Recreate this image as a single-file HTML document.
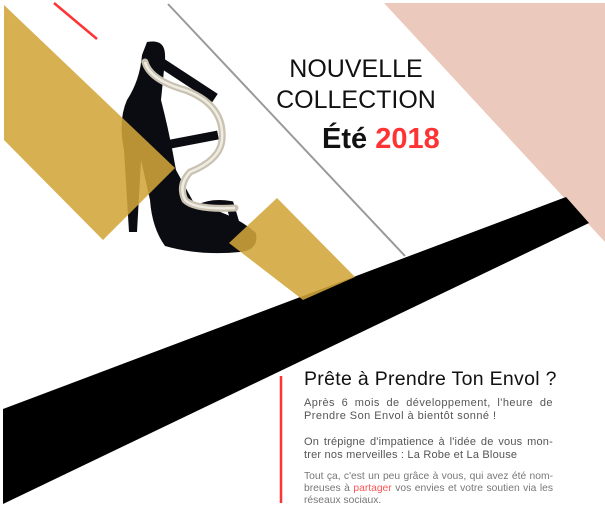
<!DOCTYPE html>
<html><head><meta charset="utf-8"><style>
html,body{margin:0;padding:0;background:#fff;}
body{width:605px;height:508px;position:relative;overflow:hidden;font-family:"Liberation Sans",sans-serif;}
svg{position:absolute;left:0;top:0;}
.t{position:absolute;color:#111;font-weight:300;}
p{margin:0;position:absolute;left:304px;width:249px;text-align:justify;font-size:11px;letter-spacing:0.45px;line-height:12.5px;color:#555;}
p span.j{display:block;text-align:justify;text-align-last:justify;white-space:nowrap;}
</style></head><body>
<svg width="605" height="508" viewBox="0 0 605 508">
<polygon points="384,3 605,3 605,242" fill="#ecc9bd"/>
<line x1="168" y1="4" x2="405" y2="256" stroke="#9a9a9a" stroke-width="2"/>
<line x1="54" y1="3" x2="97" y2="39" stroke="#f33" stroke-width="2.5"/>
<polygon points="3,409 566,197 589,223 3,504" fill="#000"/>
<path d="M147,42 C160,40 166,44 165,60 L161,100 Q170,135 176,170 L195,205 Q232,212 256,233 Q259,250 240,252 Q200,256 165,246 Q152,228 150,200 L141,160 L137,232 L129,232 L124,150 Q118,120 127,100 Q140,80 142,55 Z" fill="#0b0b12"/>
<path d="M160,62 L215,98" stroke="#0b0b12" stroke-width="10"/>
<path d="M150,148 L218,135" stroke="#0b0b12" stroke-width="9"/>
<path d="M182,222 Q200,200 230,205 L236,225" stroke="#0b0b12" stroke-width="8" fill="none"/>
<path d="M145,62 Q150,80 185,90 Q225,105 222,140 Q220,160 190,172 Q178,185 185,200 Q195,210 235,208" stroke="#c9c2b0" stroke-width="7" fill="none" stroke-linecap="round"/>
<path d="M145,62 Q150,80 185,90 Q225,105 222,140 Q220,160 190,172 Q178,185 185,200 Q195,210 235,208" stroke="#efece4" stroke-width="2.5" fill="none"/>
<polygon points="4,5 175,168 103,240 4,140" fill="#d2a53a" opacity="0.88"/>
<polygon points="229,243 277,198 355,277 303,300" fill="#d2a53a" opacity="0.88"/>
<line x1="281" y1="376" x2="281" y2="503" stroke="#f33" stroke-width="2.5"/>
</svg>
<div class="t" style="left:266px;top:54px;width:180px;text-align:center;font-size:25px;line-height:31px;">NOUVELLE<br>COLLECTION</div>
<div class="t" style="left:322px;top:123px;font-size:29px;font-weight:bold;">Été <span style="color:#f33">2018</span></div>
<div class="t" style="left:304px;top:368px;font-size:19.5px;letter-spacing:0.3px;">Prête à Prendre Ton Envol ?</div>
<p style="top:397px;">Après 6 mois de développement, l'heure de Prendre Son Envol à bientôt sonné !</p>
<p style="top:436px;letter-spacing:0.2px;"><span class="j">On trépigne d'impatience à l'idée de vous mon-</span>trer nos merveilles : La Robe et La Blouse</p>
<p style="top:471px;color:#777;font-size:10.3px;letter-spacing:0;line-height:12px;"><span class="j">Tout ça, c'est un peu grâce à vous, qui avez été nom-</span><span class="j">breuses à <span style="color:#f55">partager</span> vos envies et votre soutien via les</span>réseaux sociaux.</p>
</body></html>
